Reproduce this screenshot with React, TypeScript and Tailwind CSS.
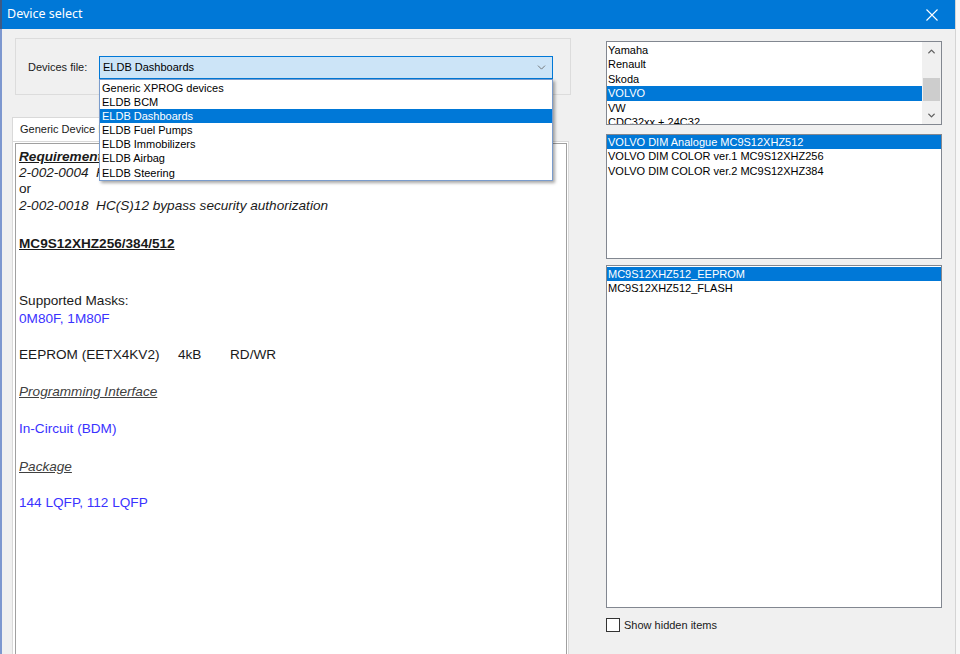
import { ChevronDown, ChevronUp } from "lucide-react";

const deviceFiles = [
  "Generic XPROG devices",
  "ELDB BCM",
  "ELDB Dashboards",
  "ELDB Fuel Pumps",
  "ELDB Immobilizers",
  "ELDB Airbag",
  "ELDB Steering",
];

const brands = ["Yamaha", "Renault", "Skoda", "VOLVO", "VW", "CDC32xx + 24C32"];

const models = [
  "VOLVO DIM Analogue MC9S12XHZ512",
  "VOLVO DIM COLOR ver.1 MC9S12XHZ256",
  "VOLVO DIM COLOR ver.2 MC9S12XHZ384",
];

const memories = ["MC9S12XHZ512_EEPROM", "MC9S12XHZ512_FLASH"];

function Row({ text, selected }: { text: string; selected?: boolean }) {
  return (
    <div
      className={`h-[14.4px] leading-[14.4px] pl-[1px] whitespace-nowrap ${
        selected ? "bg-[#0078d7] text-white" : "text-black"
      }`}
    >
      {text}
    </div>
  );
}

export default function App() {
  return (
    <div className="w-[960px] h-[654px] bg-[#f7f7f7] overflow-hidden font-['Liberation_Sans',Arial,sans-serif] text-[11px]">
      <div className="w-[956px] h-full flex flex-col border-r border-[#d4d4d4]">
        {/* Title bar */}
        <div className="h-[29px] shrink-0 bg-[#0078d7] flex items-center justify-between border-l-2 border-[#3d5a86]">
          <span className="pl-[5px] text-white text-[12.5px] font-['Noto_Sans',sans-serif]">Device select</span>
          <svg width="12" height="12" viewBox="0 0 12 12" className="mr-[17px]">
            <path d="M0.5 0.5 L11.5 11.5 M11.5 0.5 L0.5 11.5" stroke="white" strokeWidth="1.1" fill="none" />
          </svg>
        </div>

        {/* Body */}
        <div className="flex-1 flex bg-[#f0f0f0] border-l-2 border-[#7d97cf] min-h-0">
          {/* Left column */}
          <div className="w-[574px] flex flex-col min-h-0">
            {/* Group box */}
            <div className="ml-[13px] mt-[9px] w-[556px] h-[57px] shrink-0 border border-[#dcdcdc] flex items-start pt-[17px] pl-[12px]">
              <div className="w-[71px] h-[23px] leading-[23px] text-[#1a1a1a]">Devices file:</div>
              <div className="relative w-[454px] h-[23px] bg-[#cce4f7] border border-[#0078d7] flex items-center justify-between pl-[3px] pr-[4px]">
                <span className="text-black">ELDB Dashboards</span>
                <ChevronDown className="w-[13px] h-[13px] text-[#606060]" strokeWidth={1.5} />

                {/* Dropdown list */}
                <div className="absolute left-[-1px] top-[22px] w-[454px] bg-white border border-[#7a9ccc] py-[0.5px] z-10 shadow-[2px_2px_3px_rgba(0,0,0,0.35)]">
                  {deviceFiles.map((f) => (
                    <div
                      key={f}
                      className={`h-[14.2px] leading-[14.2px] pl-[2px] ${
                        f === "ELDB Dashboards" ? "bg-[#0078d7] text-white" : "text-black"
                      }`}
                    >
                      {f}
                    </div>
                  ))}
                </div>
              </div>
            </div>

            {/* Tab header */}
            <div className="ml-[10px] mt-[22px] w-[120px] h-[24px] shrink-0 bg-white border-l border-t border-r border-[#d9d9d9] pl-[7px] leading-[22px] text-[#1a1a1a]">
              Generic Device Info
            </div>

            {/* Tab page */}
            <div className="ml-[10px] w-[557px] flex-1 bg-white border border-b-0 border-[#d9d9d9] pt-[1px] pl-[2px] pr-[1px] min-h-0">
              <div className="h-full border border-b-0 border-[#a0a0a0] pl-[3px] pt-[5px] text-[13.6px] leading-[16px] text-[#1a1a1a]">
                <div className="font-bold italic underline">Requirements</div>
                <div className="italic whitespace-pre">2-002-0004  HC(S)12 adapter</div>
                <div>or</div>
                <div className="italic whitespace-pre mt-[0.5px]">2-002-0018  HC(S)12 bypass security authorization</div>
                <div className="font-bold underline mt-[22px]">MC9S12XHZ256/384/512</div>
                <div className="mt-[41px]">Supported Masks:</div>
                <div className="mt-[2px] text-[#3a32ff]">0M80F, 1M80F</div>
                <div className="mt-[20px] flex">
                  <span className="w-[159px]">EEPROM (EETX4KV2)</span>
                  <span className="w-[52px]">4kB</span>
                  <span>RD/WR</span>
                </div>
                <div className="mt-[21px] italic underline text-[#404040]">Programming Interface</div>
                <div className="mt-[21px] text-[#3a32ff]">In-Circuit (BDM)</div>
                <div className="mt-[22px] italic underline text-[#404040]">Package</div>
                <div className="mt-[20px] text-[#3a32ff]">144 LQFP, 112 LQFP</div>
              </div>
            </div>
          </div>

          {/* Right column */}
          <div className="pl-[30px] w-[366px] flex flex-col">
            {/* Brands list with scrollbar */}
            <div className="mt-[12px] h-[84px] bg-white border border-[#828790] flex overflow-hidden">
              <div className="flex-1 pt-[1px] overflow-hidden">
                {brands.map((b) => (
                  <Row key={b} text={b} selected={b === "VOLVO"} />
                ))}
              </div>
              <div className="w-[19px] bg-[#f0f0f0] flex flex-col items-center">
                <div className="h-[18px] flex items-center justify-center">
                  <ChevronUp className="w-[11px] h-[11px] text-[#606060]" strokeWidth={3} />
                </div>
                <div className="mt-[18px] w-[17px] h-[23px] bg-[#cdcdcd]" />
                <div className="flex-1" />
                <div className="h-[18px] flex items-center justify-center">
                  <ChevronDown className="w-[11px] h-[11px] text-[#606060]" strokeWidth={3} />
                </div>
              </div>
            </div>

            {/* Models list */}
            <div className="mt-[9px] h-[125px] bg-white border border-[#828790] overflow-hidden">
              {models.map((m, i) => (
                <Row key={m} text={m} selected={i === 0} />
              ))}
            </div>

            {/* Memory list */}
            <div className="mt-[6px] h-[343px] bg-white border border-[#828790] pt-[1px] overflow-hidden">
              {memories.map((m, i) => (
                <Row key={m} text={m} selected={i === 0} />
              ))}
            </div>

            {/* Checkbox */}
            <label className="mt-[9px] flex items-center gap-[4px] text-[#1a1a1a]">
              <span className="w-[14px] h-[14px] bg-white border border-[#333333]" />
              <span>Show hidden items</span>
            </label>
          </div>
        </div>
      </div>
    </div>
  );
}
